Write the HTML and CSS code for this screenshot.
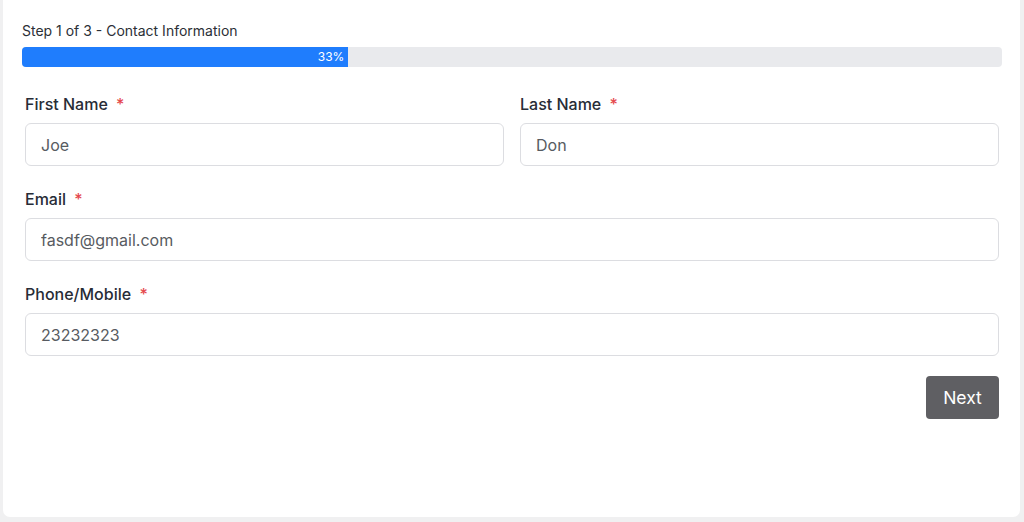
FILE: index.html
```html
<!DOCTYPE html>
<html lang="en">
<head>
<meta charset="utf-8">
<title>Contact Information</title>
<link rel="stylesheet" href="styles.css">
</head>
<body>
<div class="card">
  <div class="step">Step 1 of 3 - Contact Information</div>
  <div class="progress">
    <div class="progress-bar" style="width:33.3%">33%</div>
  </div>
  <form class="form">
    <div class="row two">
      <div class="field">
        <label class="label">First Name <span class="req">*</span></label>
        <input class="input" type="text" value="Joe">
      </div>
      <div class="field">
        <label class="label">Last Name <span class="req">*</span></label>
        <input class="input" type="text" value="Don">
      </div>
    </div>
    <div class="row">
      <div class="field">
        <label class="label">Email <span class="req">*</span></label>
        <input class="input" type="text" value="fasdf@gmail.com">
      </div>
    </div>
    <div class="row">
      <div class="field">
        <label class="label">Phone/Mobile <span class="req">*</span></label>
        <input class="input" type="text" value="23232323">
      </div>
    </div>
    <div class="actions">
      <button type="button" class="btn">Next</button>
    </div>
  </form>
</div>
</body>
</html>
```

FILE: styles.css
```css
* { box-sizing: border-box; }
html, body { margin: 0; padding: 0; }
body {
  background: #f0f0f1;
  font-family: Inter, "Noto Sans", "Liberation Sans", sans-serif;
  height: 522px;
  overflow: hidden;
}
.card {
  margin-left: 3px;
  width: 1017px;
  height: 517px;
  background: #ffffff;
  border-radius: 0 0 7px 7px;
  padding: 21px 18px 0 19px;
}
.step {
  font-size: 14px;
  line-height: 20px;
  color: #2b2f36;
  margin-bottom: 6px;
}
.progress {
  height: 20px;
  background: #e9eaed;
  border-radius: 4px;
  overflow: hidden;
  display: flex;
}
.progress-bar {
  background: #1f7dfd;
  color: #ffffff;
  font-size: 12px;
  line-height: 20px;
  text-align: right;
  padding-right: 4px;
}
.form {
  padding: 25px 3px 0 3px;
}
.row {
  display: grid;
  grid-template-columns: 1fr;
  margin-bottom: 21px;
}
.row.two {
  grid-template-columns: 1fr 1fr;
  column-gap: 16px;
}
.field {
  display: flex;
  flex-direction: column;
}
.label {
  font-size: 16px;
  line-height: 24px;
  font-weight: 500;
  color: #272c36;
  margin-bottom: 7px;
}
.req {
  color: #e5484d;
  margin-left: 4px;
}
.input {
  height: 43px;
  border: 1px solid #dcdde1;
  border-radius: 6px;
  padding: 0 15px;
  font-family: inherit;
  font-size: 16px;
  color: #575b61;
  background: #fff;
  outline: none;
}
.actions {
  display: flex;
  justify-content: flex-end;
  margin-top: -1px;
}
.btn {
  width: 73px;
  height: 43px;
  background: #5f5f63;
  color: #ffffff;
  border: none;
  border-radius: 4px;
  font-family: inherit;
  font-size: 17.5px;
  cursor: pointer;
}
```
